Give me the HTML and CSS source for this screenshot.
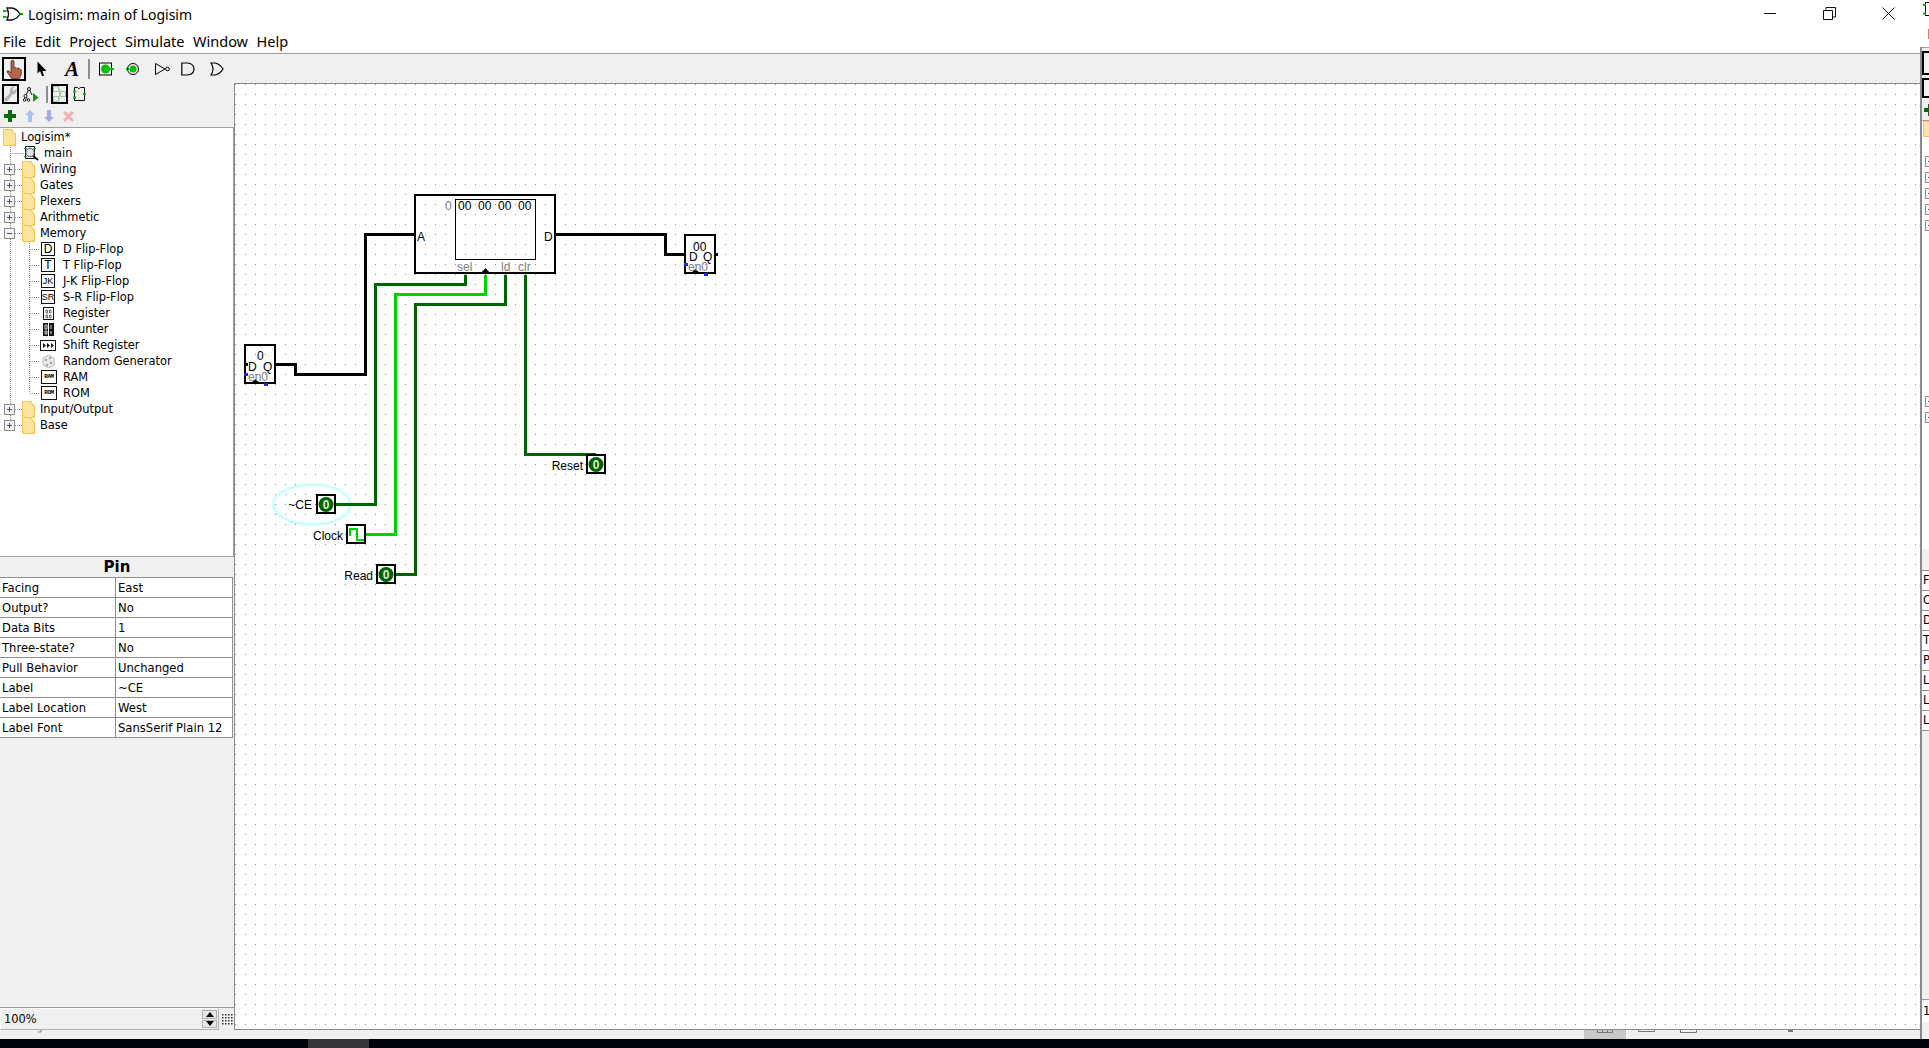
FILE: index.html
```html
<!DOCTYPE html>
<html>
  <head>
    <meta charset="utf-8" />
    <title>Logisim: main of Logisim</title>
    <link rel="stylesheet" href="styles.css">
  </head>

  <body>
    <svg class="defs" width="0" height="0">
      <symbol id="folder" viewBox="0 0 13 17">
        <path d="M.5 .5H9.5V2.5H10.5V4.5H12.5V16.5H.5Z" fill="#ffe49c" stroke="#f2c55c" />
        <path d="M10.5 14.5H12.5V16.5H10.5Z" fill="#f2c55c" />
      </symbol>
      <symbol id="plus" viewBox="0 0 11 11">
        <rect x=".5" y=".5" width="10" height="10" fill="#f4f4f4" stroke="#8e8e8e" />
        <path d="M3 5.5H8M5.5 3V8" stroke="#34508c" />
      </symbol>
      <symbol id="minus" viewBox="0 0 11 11">
        <rect x=".5" y=".5" width="10" height="10" fill="#f4f4f4" stroke="#8e8e8e" />
        <path d="M3 5.5H8" stroke="#34508c" />
      </symbol>
    </svg>

    <div class="desktop">
      <div class="window">
        <div class="titlebar">
          <svg class="title-icon" width="18" height="16" viewBox="0 0 18 16">
            <path d="M4 2H9Q14 3 17 8Q14 13 9 14H4Q7 8 4 2Z" fill="none" stroke="#111" stroke-width="1.3" />
            <path d="M1 5H5M1 11H5" stroke="#111" />
            <path d="M1 4V6M1 10V12" stroke="#00b000" stroke-width="2" />
            <path d="M17 8H20" stroke="#00b000" stroke-width="2" />
          </svg>
          <span class="title-text">Logisim: main of Logisim</span>
          <div class="win-controls">
            <svg class="win-btn win-min" width="13" height="13" viewBox="0 0 13 13"><path d="M0 6.5H12" stroke="#111" /></svg>
            <svg class="win-btn win-max" width="13" height="13" viewBox="0 0 13 13"><path d="M.5 3.5H9.5V12.5H.5ZM3 3.5V.5H12.5V10H9.5" fill="none" stroke="#111" /></svg>
            <svg class="win-btn win-close" width="13" height="13" viewBox="0 0 13 13"><path d="M.5 .5L12.5 12.5M12.5 .5L.5 12.5" stroke="#111" /></svg>
          </div>
        </div>

        <div class="menubar">
          <span>File</span><span>Edit</span><span>Project</span><span>Simulate</span><span>Window</span><span>Help</span>
        </div>

        <div class="toolbar">
          <div class="tool tool-on">
            <svg width="20" height="20" viewBox="0 0 20 20">
              <path d="M7 2Q8.5 .5 10 2V9L12 8.500L13 9.500L15 9L16 10.500L17 10.500Q18 12 17 16L15 20H8L3 13Q3 11 5 12L7 14Z" fill="#b4654a" stroke="#4b2a1e" stroke-width=".8" />
            </svg>
          </div>
          <svg class="tool-arrow" width="10" height="16" viewBox="0 0 10 16"><path d="M.5 .5V12.500L3 10L5 15H7L5.500 10H9.500Z" fill="#000" /></svg>
          <span class="tool-text">A</span>
          <i class="tool-sep"></i>
          <svg class="tool-gate" width="18" height="14" viewBox="0 0 18 14">
            <rect x=".5" y="1" width="12" height="12" fill="none" stroke="#000" />
            <circle cx="6.500" cy="7" r="4.500" fill="#00c000" />
            <path d="M10 7H15" stroke="#00c000" stroke-width="2" />
          </svg>
          <svg class="tool-gate g2" width="18" height="14" viewBox="0 0 18 14">
            <path d="M0 7H3" stroke="#00c000" stroke-width="2" />
            <circle cx="7" cy="7" r="5.500" fill="none" stroke="#000" />
            <circle cx="7" cy="7" r="3.500" fill="#00c000" />
          </svg>
          <svg class="tool-gate g3" width="16" height="14" viewBox="0 0 16 14">
            <path d="M.5 1.500L10 7L.5 12.500Z" fill="none" stroke="#000" />
            <circle cx="12.500" cy="7" r="1.800" fill="none" stroke="#000" />
          </svg>
          <svg class="tool-gate g4" width="14" height="14" viewBox="0 0 14 14">
            <path d="M.8 1H6Q13 1.500 13 7T6 13H.8Z" fill="none" stroke="#000" stroke-width="1.200" />
          </svg>
          <svg class="tool-gate g5" width="14" height="14" viewBox="0 0 14 14">
            <path d="M1 1H5Q10 2 13 7Q10 12 5 13H1Q5 7 1 1Z" fill="none" stroke="#000" stroke-width="1.200" />
          </svg>
        </div>

        <div class="workspace">
          <div class="side">
            <div class="side-tools">
              <div class="tool-small tool-on">
                <svg width="13" height="16" viewBox="0 0 13 16">
                  <path d="M0 13L6 7Q5 2 9 .5L11 .5L8.500 3.500L10 5L12.500 2.500Q13.500 8 8.500 8.500L3 15.500Q0 16 0 13Z" fill="#b4b4b4" />
                </svg>
              </div>
              <svg class="st-tree" width="16" height="16" viewBox="0 0 16 16">
                <path d="M6 3L2.500 10M6 3L9 9M2.500 10L1 14M2.500 10L5 14" stroke="#111" fill="none" />
                <circle cx="6" cy="3" r="1.500" fill="#fff" stroke="#111" />
                <circle cx="2.500" cy="10" r="1.500" fill="#fff" stroke="#111" />
                <circle cx="1.500" cy="14" r="1.300" fill="#fff" stroke="#111" />
                <circle cx="5.500" cy="14" r="1.300" fill="#fff" stroke="#111" />
                <path d="M10 7L15.500 11.500L10 16Z" fill="#1f8a1f" />
              </svg>
              <i class="st-sep"></i>
              <div class="tool-small tool-on st-layout">
                <svg width="13" height="16" viewBox="0 0 13 16">
                  <path d="M.5 .5H5.500V5.500H.5ZM.5 10.500H5.500V15.500H.5ZM7.500 5.500H12.500V10.500H7.500ZM5.500 3H6.500V13H5.500M6.500 8H7.500" fill="none" stroke="#9fc79f" />
                </svg>
              </div>
              <svg class="st-appear" width="13" height="16" viewBox="0 0 13 16">
                <path d="M1.500 1.500H4.500Q5.500 4 7.500 1.500H11.500V14.500H1.500Z" fill="none" stroke="#111" />
                <path d="M0 5.500H3M0 11.500H3M10 8H13" stroke="#00c000" stroke-width="2" />
              </svg>
            </div>
            <div class="side-actions">
              <svg width="12" height="12" viewBox="0 0 12 12"><path d="M4 0H8V4H12V8H8V12H4V8H0V4H4Z" fill="#0b6a0b" /></svg>
              <svg width="10" height="12" viewBox="0 0 10 12"><path d="M5 0L10 5H7V12H3V5H0Z" fill="#a9c2f2" /></svg>
              <svg width="10" height="12" viewBox="0 0 10 12"><path d="M5 12L10 7H7V0H3V7H0Z" fill="#a4a7e4" /></svg>
              <svg width="11" height="11" viewBox="0 0 11 11"><path d="M1 1L10 10M10 1L1 10" stroke="#f0b0b0" stroke-width="3" /></svg>
            </div>

            <div class="tree">
              <svg class="tree-lines" width="40" height="300" viewBox="0 0 40 300">
                <path d="M10.500 17V297M29.500 105V265" stroke="#888" stroke-dasharray="1 1" />
                <path d="M10.500 25.500H24M15 41.500H22M15 57.500H22M15 73.500H22M15 89.500H22M15 105.500H22M15 281.500H22M15 297.500H22M30 121.500H40M30 137.500H40M30 153.500H40M30 169.500H40M30 185.500H40M30 201.500H40M30 217.500H40M30 233.500H40M30 249.500H40M30 265.500H40" stroke="#888" stroke-dasharray="1 1" />
              </svg>
              <div class="node root"><svg class="folder"><use href="#folder" /></svg>Logisim*</div>
              <div class="node sub-main">
                <svg class="leaf-main" width="16" height="16" viewBox="0 0 16 16">
                  <path d="M1.500 1.500H10.500V13.500H1.500Z" fill="none" stroke="#111" />
                  <circle cx="6" cy="7.500" r="4.200" fill="#dfe4f4" stroke="#555" />
                  <path d="M9 11L14 15" stroke="#111" stroke-width="2" />
                  <path d="M0 3.500H3M9 3.500H12M0 11.500H3" stroke="#00b000" />
                </svg>main
              </div>
              <div class="node lib"><svg class="twist"><use href="#plus" /></svg><svg class="folder"><use href="#folder" /></svg>Wiring</div>
              <div class="node lib"><svg class="twist"><use href="#plus" /></svg><svg class="folder"><use href="#folder" /></svg>Gates</div>
              <div class="node lib"><svg class="twist"><use href="#plus" /></svg><svg class="folder"><use href="#folder" /></svg>Plexers</div>
              <div class="node lib"><svg class="twist"><use href="#plus" /></svg><svg class="folder"><use href="#folder" /></svg>Arithmetic</div>
              <div class="node lib"><svg class="twist"><use href="#minus" /></svg><svg class="folder"><use href="#folder" /></svg>Memory</div>
              <div class="node item"><span class="ff">D</span>D Flip-Flop</div>
              <div class="node item"><span class="ff">T</span>T Flip-Flop</div>
              <div class="node item"><span class="ff ff-small">JK</span>J-K Flip-Flop</div>
              <div class="node item"><span class="ff ff-small">SR</span>S-R Flip-Flop</div>
              <div class="node item">
                <svg class="leaf" viewBox="0 0 15 15"><rect x="2.500" y="1.500" width="10" height="12" fill="none" stroke="#111" /><path d="M5 4H6.500V7H5ZM8.500 4H10V7H8.500ZM5 9H6.500V12H5ZM8.500 9H10V12H8.500Z" fill="none" stroke="#555" stroke-width=".8" /></svg>Register
              </div>
              <div class="node item">
                <svg class="leaf" viewBox="0 0 15 15"><rect x="2" y="1" width="11" height="13" fill="#111" /><path d="M7.500 1V14" stroke="#fff" /><path d="M4 3H6V7H4ZM10 3V7M4 9H6V12H4ZM10 9V12" fill="none" stroke="#ddd" /></svg>Counter
              </div>
              <div class="node item">
                <svg class="leaf leaf-wide" viewBox="0 0 16 11"><rect x=".5" y=".5" width="15" height="10" fill="#fff" stroke="#111" /><path d="M3 3V8L6 5.500ZM7 3V8L10 5.500ZM11 3V8L14 5.500Z" fill="#111" /></svg>Shift Register
              </div>
              <div class="node item">
                <svg class="leaf" viewBox="0 0 15 15"><path d="M7.500 1L13 4V11L7.500 14L2 11V4Z" fill="#e7e7e7" stroke="#bbb" /><circle cx="5" cy="6" r="1" fill="#888" /><circle cx="9" cy="4" r="1" fill="#888" /><circle cx="10" cy="9" r="1" fill="#888" /><circle cx="6" cy="11" r="1" fill="#888" /></svg>Random Generator
              </div>
              <div class="node item"><span class="mem">RAM</span>RAM</div>
              <div class="node item"><span class="mem">ROM</span>ROM</div>
              <div class="node lib"><svg class="twist"><use href="#plus" /></svg><svg class="folder"><use href="#folder" /></svg>Input/Output</div>
              <div class="node lib"><svg class="twist"><use href="#plus" /></svg><svg class="folder"><use href="#folder" /></svg>Base</div>
            </div>

            <div class="attr-title">Pin</div>
            <div class="attr-table">
              <div class="attr-key">Facing</div><div class="attr-val">East</div>
              <div class="attr-key">Output?</div><div class="attr-val">No</div>
              <div class="attr-key">Data Bits</div><div class="attr-val">1</div>
              <div class="attr-key">Three-state?</div><div class="attr-val">No</div>
              <div class="attr-key">Pull Behavior</div><div class="attr-val">Unchanged</div>
              <div class="attr-key">Label</div><div class="attr-val">~CE</div>
              <div class="attr-key">Label Location</div><div class="attr-val">West</div>
              <div class="attr-key">Label Font</div><div class="attr-val">SansSerif Plain 12</div>
            </div>
            <div class="side-fill"></div>

            <div class="zoom-row">
              <div class="zoom-box">
                <span class="zoom-value">100%</span>
                <div class="spin">
                  <div class="spin-btn"><i class="tri-up"></i></div>
                  <div class="spin-btn"><i class="tri-down"></i></div>
                </div>
              </div>
              <svg class="grip" width="11" height="11">
                <pattern id="grip-dots" width="3" height="3" patternUnits="userSpaceOnUse">
                  <rect width="1.500" height="1.500" fill="#333" />
                </pattern>
                <rect width="11" height="11" fill="url(#grip-dots)" />
              </svg>
            </div>
          </div>

          <svg class="canvas" viewBox="235 84 1685 945">
            <defs>
              <pattern id="dots" x="5" y="4" width="10" height="10" patternUnits="userSpaceOnUse">
                <rect width="1" height="1" fill="#888" />
              </pattern>
            </defs>
            <rect x="235" y="84" width="1685" height="945" fill="url(#dots)" />

            <ellipse cx="312" cy="504.500" rx="38.500" ry="20" class="halo" />

            <g transform="translate(.5 .5)" fill="none" shape-rendering="crispEdges">
              <path class="wire-off" d="M275 364H295V374H365V234H415M555 234H665V254H685" />
              <path class="wire-low" d="M335 504H375V284H465V274" />
              <path class="wire-high" d="M365 534H395V294H485V274" />
              <path class="wire-low" d="M395 574H415V304H505V274" />
              <path class="wire-low" d="M595 454H525V274" />
              <rect class="box-thin" x="455" y="199" width="80" height="60" />
              <path class="clock-wave" d="M349 535V528H356V539H363" />
            </g>

            <g fill="none" shape-rendering="crispEdges">
              <rect class="box" x="415" y="195" width="140" height="78" />
              <rect class="box" x="685" y="235" width="30" height="38" />
              <rect class="box" x="245" y="345" width="30" height="38" />
              <rect class="box" x="317" y="495" width="18" height="18" />
              <rect class="box" x="347" y="525" width="18" height="18" />
              <rect class="box" x="377" y="565" width="18" height="18" />
              <rect class="box" x="587" y="455" width="18" height="18" />
            </g>

            <path d="M480 274L485.500 268L491 274Z M690 274L695.500 269L701 274Z M250 384L255.500 379L261 384Z" fill="#000" />
            <path d="M244 363H248V366H244ZM714 253H718V256H714ZM274 363H277V366H274Z" fill="#000" />
            <path d="M684 263H688V266H684ZM704 273H708V276H704ZM244 373H248V376H244ZM264 383H268V386H264Z" fill="#2222e0" />

            <text class="dim" x="445" y="210">0</text>
            <text class="val" x="458" y="210">00</text>
            <text class="val" x="478" y="210">00</text>
            <text class="val" x="498" y="210">00</text>
            <text class="val" x="518" y="210">00</text>
            <text class="val" x="417" y="241">A</text>
            <text class="val" x="544" y="241">D</text>
            <text class="dim" x="457" y="271">sel</text>
            <text class="dim" x="501" y="271">ld</text>
            <text class="dim" x="518" y="271">clr</text>

            <text class="val" x="693" y="251">00</text>
            <text class="val" x="689" y="261">D</text>
            <text class="val" x="703" y="261">Q</text>
            <text class="dim" x="688" y="271">en0</text>

            <text class="val" x="257" y="360">0</text>
            <text class="val" x="248" y="371">D</text>
            <text class="val" x="263" y="371">Q</text>
            <text class="dim" x="248" y="381">en0</text>

            <text class="val end" x="312" y="509">~CE</text>
            <text class="val end" x="343" y="540">Clock</text>
            <text class="val end" x="373" y="580">Read</text>
            <text class="val end" x="583" y="470">Reset</text>

            <circle class="pin-on" cx="326" cy="504.500" r="7.500" />
            <text class="pin-bit" x="326" y="509">0</text>
            <circle class="pin-on" cx="386" cy="574.500" r="7.500" />
            <text class="pin-bit" x="386" y="579">0</text>
            <circle class="pin-on" cx="596" cy="464.500" r="7.500" />
            <text class="pin-bit" x="596" y="469">0</text>
          </svg>
        </div>

        <svg class="strip" width="1920" height="9" viewBox="0 0 1920 9">
          <rect x="1584" width="42" height="9" fill="#c8c8c8" />
          <path d="M1597.500 0V2.500H1612.500V0M1602.500 0V2.500M1607.500 0V2.500M1638.500 0V1.500H1654.500V0M1680.500 0V2.500H1696.500V0" fill="none" stroke="#777" />
          <rect x="1788" y="0" width="5" height="2" fill="#777" />
          <path d="M38 2H41V0" fill="none" stroke="#777" />
        </svg>
      </div>

      <div class="peek">
        <div class="peek-top">
          <svg class="peek-icon" width="7" height="14" viewBox="0 0 7 14">
            <path d="M3 .5H7M3 13.500H7M3.500 0V14" stroke="#111" />
            <path d="M1 3H4M1 11.500H4" stroke="#00b000" stroke-width="2" />
          </svg>
          <span class="peek-menu">F</span>
        </div>
        <div class="peek-body">
          <div class="peek-tools">
            <i class="peek-box peek-box-a"></i>
            <i class="peek-box peek-box-b"></i>
            <svg class="peek-plus" width="7" height="12" viewBox="0 0 7 12"><path d="M0 4H4V0H7V12H4V8H0Z" fill="#0b6a0b" /></svg>
          </div>
          <div class="peek-tree">
            <i class="peek-folder"></i>
            <div class="peek-group">
              <svg class="twist"><use href="#plus" /></svg>
              <svg class="twist"><use href="#plus" /></svg>
              <svg class="twist"><use href="#plus" /></svg>
              <svg class="twist"><use href="#plus" /></svg>
              <svg class="twist"><use href="#plus" /></svg>
            </div>
            <div class="peek-group peek-group-low">
              <svg class="twist"><use href="#plus" /></svg>
              <svg class="twist"><use href="#plus" /></svg>
            </div>
          </div>
          <div class="peek-title"></div>
          <div class="peek-rows">
            <span>F</span><span>O</span><span>D</span><span>T</span><span>P</span><span>L</span><span>L</span><span>L</span>
          </div>
          <div class="peek-fill"></div>
          <div class="peek-zoom">1</div>
          <div class="peek-end"></div>
        </div>
      </div>
    </div>

    <div class="taskbar"><i class="task-active"></i></div>
  </body>
</html>
```

FILE: styles.css
```css
* {
  box-sizing: border-box;
}

html,
body {
  margin: 0;
  height: 100%;
  overflow: hidden;
}

body {
  background: #fff;
  color: #000;
  font-family: "DejaVu Sans", sans-serif;
  font-size: 11.4px;
}

.defs {
  position: absolute;
}

.desktop {
  display: flex;
  height: 1039px;
}

.window {
  width: 1920px;
  display: flex;
  flex-direction: column;
}

/* title + menu */
.titlebar {
  height: 27px;
  display: flex;
  align-items: center;
  padding-left: 3px;
  background: #fff;
}

.title-icon {
  overflow: visible;
}

.title-text {
  margin: 1px 0 0 7px;
  font-family: "Noto Sans", sans-serif;
  font-size: 14px;
}

.win-controls {
  margin-left: auto;
  display: flex;
  align-items: center;
  padding-right: 25px;
  gap: 46px;
}

.menubar {
  height: 27px;
  display: flex;
  align-items: center;
  gap: 8.5px;
  padding: 1px 0 0 3px;
  background: #fff;
  border-bottom: 1px solid #a0a0a0;
  font-family: "Noto Sans", sans-serif;
  font-size: 14.5px;
}

/* top toolbar */
.toolbar {
  height: 29px;
  display: flex;
  align-items: center;
  padding: 1px 0 0 2px;
  background: #f0f0f0;
}

.tool {
  width: 24px;
  height: 24px;
  border: 2px solid #000;
  display: flex;
  align-items: center;
  justify-content: center;
}

.tool-arrow {
  margin-left: 11px;
}

.tool-text {
  margin-left: 18px;
  font-family: "Liberation Serif", serif;
  font-size: 21px;
  font-weight: bold;
  font-style: italic;
  width: 13px;
  line-height: 20px;
}

.tool-sep {
  width: 2px;
  height: 20px;
  margin-left: 10px;
  background: #8e8e8e;
}

.tool-gate {
  margin-left: 9px;
}

.tool-gate.g2 {
  margin-left: 9px;
}

.tool-gate.g3 {
  margin-left: 11px;
}

.tool-gate.g4 {
  margin-left: 10px;
}

.tool-gate.g5 {
  margin-left: 15px;
}

/* workspace */
.workspace {
  height: 947px;
  display: flex;
  min-height: 0;
}

.side {
  width: 234px;
  display: flex;
  flex-direction: column;
  background: #f0f0f0;
}

.side-tools {
  height: 20px;
  margin-top: 1px;
  display: flex;
  align-items: center;
  padding-left: 2px;
}

.tool-small {
  width: 17px;
  height: 20px;
  border: 2px solid #000;
  display: flex;
  align-items: center;
  justify-content: center;
}

.st-tree {
  margin-left: 4px;
}

.st-sep {
  width: 2px;
  height: 17px;
  margin-left: 7px;
  background: #8e8e8e;
}

.st-layout {
  margin-left: 3px;
}

.st-appear {
  margin-left: 5px;
}

.side-actions {
  height: 23px;
  display: flex;
  align-items: center;
  gap: 9px;
  padding: 1px 0 0 4px;
}

.tree {
  position: relative;
  height: 430px;
  padding-top: 1px;
  background: #fff;
  border-top: 1px solid #a0a0a0;
  border-bottom: 1px solid #a0a0a0;
  border-right: 1px solid #a0a0a0;
  line-height: 16px;
}

.tree-lines {
  position: absolute;
  left: 0;
  top: 0;
  overflow: visible;
}

.node {
  position: relative;
  height: 16px;
  display: flex;
  align-items: center;
  white-space: nowrap;
}

.folder {
  width: 13px;
  height: 17px;
  flex: none;
}

.twist {
  width: 11px;
  height: 11px;
  flex: none;
  display: block;
}

.root {
  padding-left: 3px;
}

.root .folder {
  margin-right: 5px;
}

.sub-main {
  padding-left: 24px;
}

.leaf-main {
  margin-right: 4px;
}

.lib {
  padding-left: 4px;
}

.lib .folder {
  margin: 0 5px 0 7px;
}

.item {
  padding-left: 41px;
}

.ff {
  width: 14px;
  height: 14px;
  margin-right: 8px;
  border: 1px solid #111;
  background: #fff;
  display: flex;
  align-items: center;
  justify-content: center;
  font-family: "Liberation Sans", sans-serif;
  font-size: 12px;
  line-height: 12px;
  flex: none;
}

.ff-small {
  font-size: 9px;
}

.leaf {
  width: 15px;
  height: 15px;
  margin-right: 7px;
  flex: none;
}

.leaf-wide {
  width: 16px;
  margin-left: -1px;
}

.mem {
  width: 16px;
  height: 14px;
  margin: 0 6px 0 0;
  border: 1px solid #111;
  background: #fff;
  font-family: "Liberation Mono", monospace;
  font-size: 6px;
  font-weight: bold;
  line-height: 12px;
  text-align: center;
  letter-spacing: -.4px;
  flex: none;
}

/* attribute table */
.attr-title {
  height: 20px;
  text-align: center;
  font-size: 15px;
  font-weight: bold;
  line-height: 21px;
  background: #f0f0f0;
}

.attr-table {
  display: grid;
  grid-template-columns: 116px 116px;
  grid-auto-rows: 20px;
  width: 233px;
  border-right: 1px solid #8e8e8e;
  background: #fff;
  border-top: 1px solid #8e8e8e;
  font-size: 11.6px;
}

.attr-key,
.attr-val {
  padding-left: 2px;
  line-height: 20px;
  border-bottom: 1px solid #8e8e8e;
  white-space: nowrap;
  overflow: hidden;
}

.attr-key {
  border-right: 1px solid #8e8e8e;
}

.side-fill {
  flex: 1;
  border-bottom: 1px solid #9a9a9a;
}

.zoom-row {
  height: 22px;
  display: flex;
  align-items: center;
}

.zoom-box {
  width: 219px;
  height: 22px;
  display: flex;
  align-items: center;
  justify-content: space-between;
  padding: 1px 1px 1px 3px;
  background: #f0f0f0;
  border: 1px solid #b0b0b0;
  border-top-color: #fff;
  border-left-color: #fff;
}

.spin {
  width: 15px;
  height: 18px;
  display: flex;
  flex-direction: column;
  gap: 1px;
}

.spin-btn {
  flex: 1;
  display: flex;
  align-items: center;
  justify-content: center;
  background: #e8e8e8;
  border: 1px solid #b0b0b0;
}

.tri-up,
.tri-down {
  width: 0;
  height: 0;
  border-left: 4px solid transparent;
  border-right: 4px solid transparent;
}

.tri-up {
  border-bottom: 5px solid #000;
}

.tri-down {
  border-top: 5px solid #000;
}

.grip {
  margin-left: 3px;
}

/* circuit canvas */
.canvas {
  width: 1686px;
  height: 947px;
  flex: none;
  display: block;
  background: #fff;
  border-style: solid;
  border-color: #8a8a96;
  border-width: 1px 0 1px 1px;
}

.wire-off,
.wire-low,
.wire-high {
  stroke-width: 3px;
}

.wire-off {
  stroke: #000;
}

.wire-low {
  stroke: #006400;
}

.wire-high {
  stroke: #00d200;
}

.box {
  stroke: #000;
  stroke-width: 2px;
}

.box-thin {
  stroke: #000;
  stroke-width: 1px;
}

.clock-wave {
  stroke: #00d200;
  stroke-width: 2px;
}

.halo {
  fill: none;
  stroke: #ccffff;
  stroke-width: 3px;
}

.canvas text {
  font-family: "Liberation Sans", sans-serif;
  font-size: 12px;
}

.val {
  fill: #000;
}

.dim {
  fill: #808080;
}

.end {
  text-anchor: end;
}

.pin-on {
  fill: #006400;
}

.canvas .pin-bit {
  fill: #d8efd8;
  font-size: 12px;
  font-weight: bold;
  text-anchor: middle;
}

.strip {
  display: block;
  background: #f0f0f0;
}

/* neighbouring window that sticks out on the right */
.peek {
  flex: 1;
  display: flex;
  flex-direction: column;
  overflow: hidden;
}

.peek-top {
  height: 47px;
  padding: 2px 0 0 2px;
  background: #fff;
}

.peek-icon {
  display: block;
}

.peek-menu {
  display: block;
  margin: 10px 0 0 5px;
  font-family: "Noto Sans", sans-serif;
  font-size: 14px;
  line-height: 16px;
  color: #555;
}

.peek-body {
  flex: 1;
  display: flex;
  flex-direction: column;
  border-left: 2px solid #8a8a96;
}

.peek-tools {
  height: 74px;
  padding-top: 3px;
  background: #f0f0f0;
  border-top: 1px solid #a0a0a0;
  border-bottom: 1px solid #a0a0a0;
}

.peek-box {
  display: block;
  width: 10px;
  border: 2px solid #000;
  border-right: 0;
}

.peek-box-a {
  height: 24px;
}

.peek-box-b {
  height: 20px;
  margin-top: 3px;
}

.peek-plus {
  display: block;
  margin: 6px 0 0 2px;
}

.peek-tree {
  height: 428px;
  background: #fff;
}

.peek-folder {
  display: block;
  width: 8px;
  height: 16px;
  margin-left: 1px;
  background: #ffe49c;
  border: 1px solid #f2c55c;
  border-right: 0;
}

.peek-group {
  display: flex;
  flex-direction: column;
  gap: 5px;
  margin: 19px 0 0 3px;
}

.peek-group-low {
  margin-top: 165px;
}

.peek-title {
  height: 21px;
  background: #f0f0f0;
}

.peek-rows {
  display: flex;
  flex-direction: column;
  background: #fff;
  border-top: 1px solid #8e8e8e;
}

.peek-rows span {
  height: 20px;
  padding-left: 1px;
  line-height: 19px;
  border-bottom: 1px solid #8e8e8e;
}

.peek-fill {
  height: 269px;
  background: #f0f0f0;
  border-bottom: 1px solid #9a9a9a;
}

.peek-zoom {
  height: 22px;
  padding: 1px 0 0 1px;
  line-height: 20px;
  background: #fff;
}

.peek-end {
  flex: 1;
  background: #f0f0f0;
}

/* taskbar sliver */
.taskbar {
  height: 9px;
  padding-left: 308px;
  background: #01030a;
}

.task-active {
  display: block;
  width: 61px;
  height: 9px;
  background: #35363a;
}
```
